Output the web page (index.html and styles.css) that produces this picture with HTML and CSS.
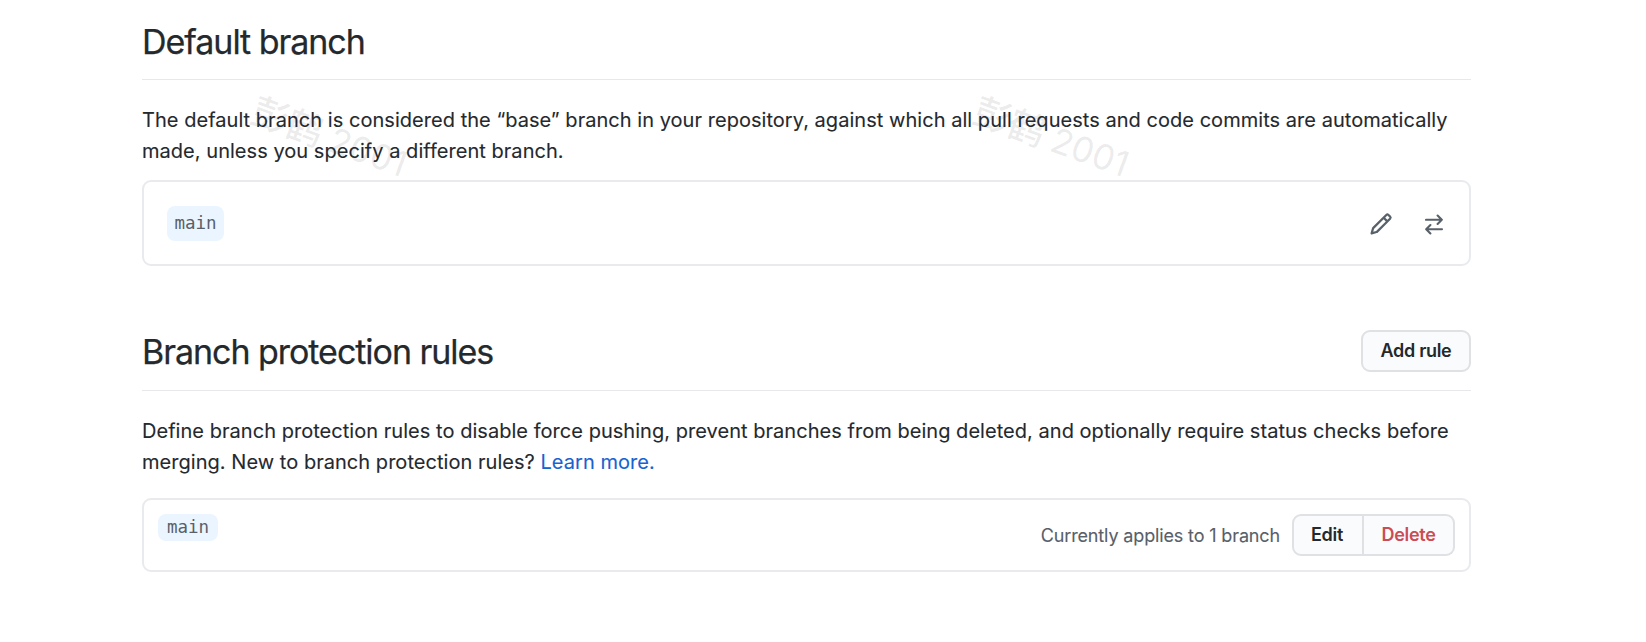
FILE: index.html
```html
<!DOCTYPE html>
<html lang="en">
<head>
<meta charset="utf-8">
<title>Branches</title>
<link rel="stylesheet" href="styles.css">
</head>
<body>
<main class="page">
  <section class="default-branch">
    <header class="subhead"><h2 class="title title-default">Default branch</h2></header>
    <p class="copy copy-default">The default branch is considered the “base” branch in your repository, against which all pull requests and code commits are automatically<br>made, unless you specify a different branch.</p>
    <div class="box box-default">
      <code class="branch branch-large">main</code>
      <div class="actions">
        <svg class="icon pencil" viewBox="0 0 16 16"><path d="M11.013 1.427a1.75 1.75 0 0 1 2.474 0l1.086 1.086a1.75 1.75 0 0 1 0 2.474l-8.61 8.61c-.21.21-.47.364-.756.445l-3.251.93a.75.75 0 0 1-.927-.928l.929-3.25a1.75 1.75 0 0 1 .445-.758l8.61-8.61Zm1.414 1.06a.25.25 0 0 0-.354 0L10.811 3.75l1.439 1.44 1.263-1.263a.25.25 0 0 0 0-.354l-1.086-1.086ZM11.189 6.25 9.75 4.81l-6.286 6.287a.25.25 0 0 0-.064.108l-.558 1.953 1.953-.558a.249.249 0 0 0 .108-.064l6.286-6.286Z"/></svg>
        <svg class="icon swap" viewBox="0 0 18 21" fill="none"><path d="M1 5.8H16.5M12.6 1.6 16.8 5.8 12.6 10M17 15.2H1.5M5.4 11 1.2 15.2 5.4 19.4"/></svg>
      </div>
    </div>
  </section>
  <section class="rules">
    <header class="subhead subhead-rules">
      <h2 class="title title-rules">Branch protection rules</h2>
      <button class="btn btn-add">Add rule</button>
    </header>
    <p class="copy copy-rules">Define branch protection rules to disable force pushing, prevent branches from being deleted, and optionally require status checks before<br>merging. New to branch protection rules? <a class="link" href="#">Learn more.</a></p>
    <div class="box box-rules">
      <code class="branch branch-small">main</code>
      <div class="rule-actions">
        <span class="applies">Currently applies to 1 branch</span>
        <div class="group">
          <button class="btn btn-edit">Edit</button>
          <button class="btn btn-delete">Delete</button>
        </div>
      </div>
    </div>
  </section>
</main>
<div class="watermark mark-left"><span class="mark-name">彭鹤</span> 2001</div>
<div class="watermark mark-right"><span class="mark-name">彭鹤</span> 2001</div>
</body>
</html>
```
FILE: styles.css
```css
* { box-sizing: border-box; }
body {
  margin: 0;
  background: #fff;
  color: #24292e;
  font-family: Inter, "Liberation Sans", sans-serif;
  overflow: hidden;
}
.page { width: 1329px; margin-left: 142px; }
.subhead {
  display: flex;
  align-items: flex-start;
  justify-content: space-between;
  height: 80px;
  border-bottom: 1px solid #e6e8eb;
}
.title {
  margin: 22px 0 0;
  font-size: 34px;
  font-weight: 400;
  line-height: 40px;
  letter-spacing: -1.04px;
  -webkit-text-stroke: .25px currentColor;
  white-space: nowrap;
}
.title-rules { margin-top: 21px; }
.copy {
  margin: 25px 0 0;
  font-size: 20px;
  line-height: 31px;
  letter-spacing: .038px;
  -webkit-text-stroke: .1px currentColor;
  white-space: nowrap;
}
.box {
  display: flex;
  justify-content: space-between;
  border: 2px solid #e8eaed;
  border-radius: 9px;
}
.box-default {
  height: 86px;
  margin-top: 13px;
  padding: 0 26px 0 23px;
  align-items: center;
}
.branch {
  border-radius: 8px;
  background: #eaf5ff;
  color: #586069;
  font-family: "DejaVu Sans Mono", monospace;
  font-size: 17.5px;
}
.branch-large { padding: 0 7.5px; line-height: 35px; }
.branch-small { height: 27px; padding: 0 9px; line-height: 27px; }
.actions { display: flex; align-items: center; gap: 32px; padding-top: 2px; }
.icon { display: block; }
.pencil { width: 24px; height: 24px; fill: #586069; }
.swap { width: 18px; height: 21px; stroke: #586069; stroke-width: 2.1; stroke-linecap: round; stroke-linejoin: round; }
.rules { padding-top: 45px; }
.btn {
  margin: 0;
  padding: 0;
  height: 42px;
  border: 2px solid #dfe1e4;
  border-radius: 9px;
  background: #fafbfc;
  color: #24292e;
  font: 600 18px/38px Inter, "Liberation Sans", sans-serif;
  letter-spacing: -.3px;
}
.btn-add { width: 110px; margin-top: 19px; }
.link { color: #1763cf; text-decoration: none; }
.box-rules { height: 74px; margin-top: 20px; padding: 14px; }
.rule-actions { display: flex; align-items: center; gap: 12px; height: 42px; }
.applies { color: #586069; font-size: 18px; letter-spacing: -.14px; -webkit-text-stroke: .1px currentColor; white-space: nowrap; }
.group { display: flex; }
.btn-edit { width: 72px; padding-right: 2px; border-radius: 9px 0 0 9px; }
.btn-delete { width: 91px; border-left: 0; border-radius: 0 9px 9px 0; color: #cb4c55; }
.watermark {
  position: absolute;
  top: 112px;
  width: 160px;
  color: rgba(60, 60, 60, .1);
  font: 400 35px/50px Inter, "Noto Sans CJK SC", sans-serif;
  white-space: nowrap;
  transform: rotate(20deg);
  pointer-events: none;
}
.mark-name { font-size: 37px; font-weight: 500; letter-spacing: -.5px; }
.mark-left { left: 248px; }
.mark-right { left: 970px; }
```
